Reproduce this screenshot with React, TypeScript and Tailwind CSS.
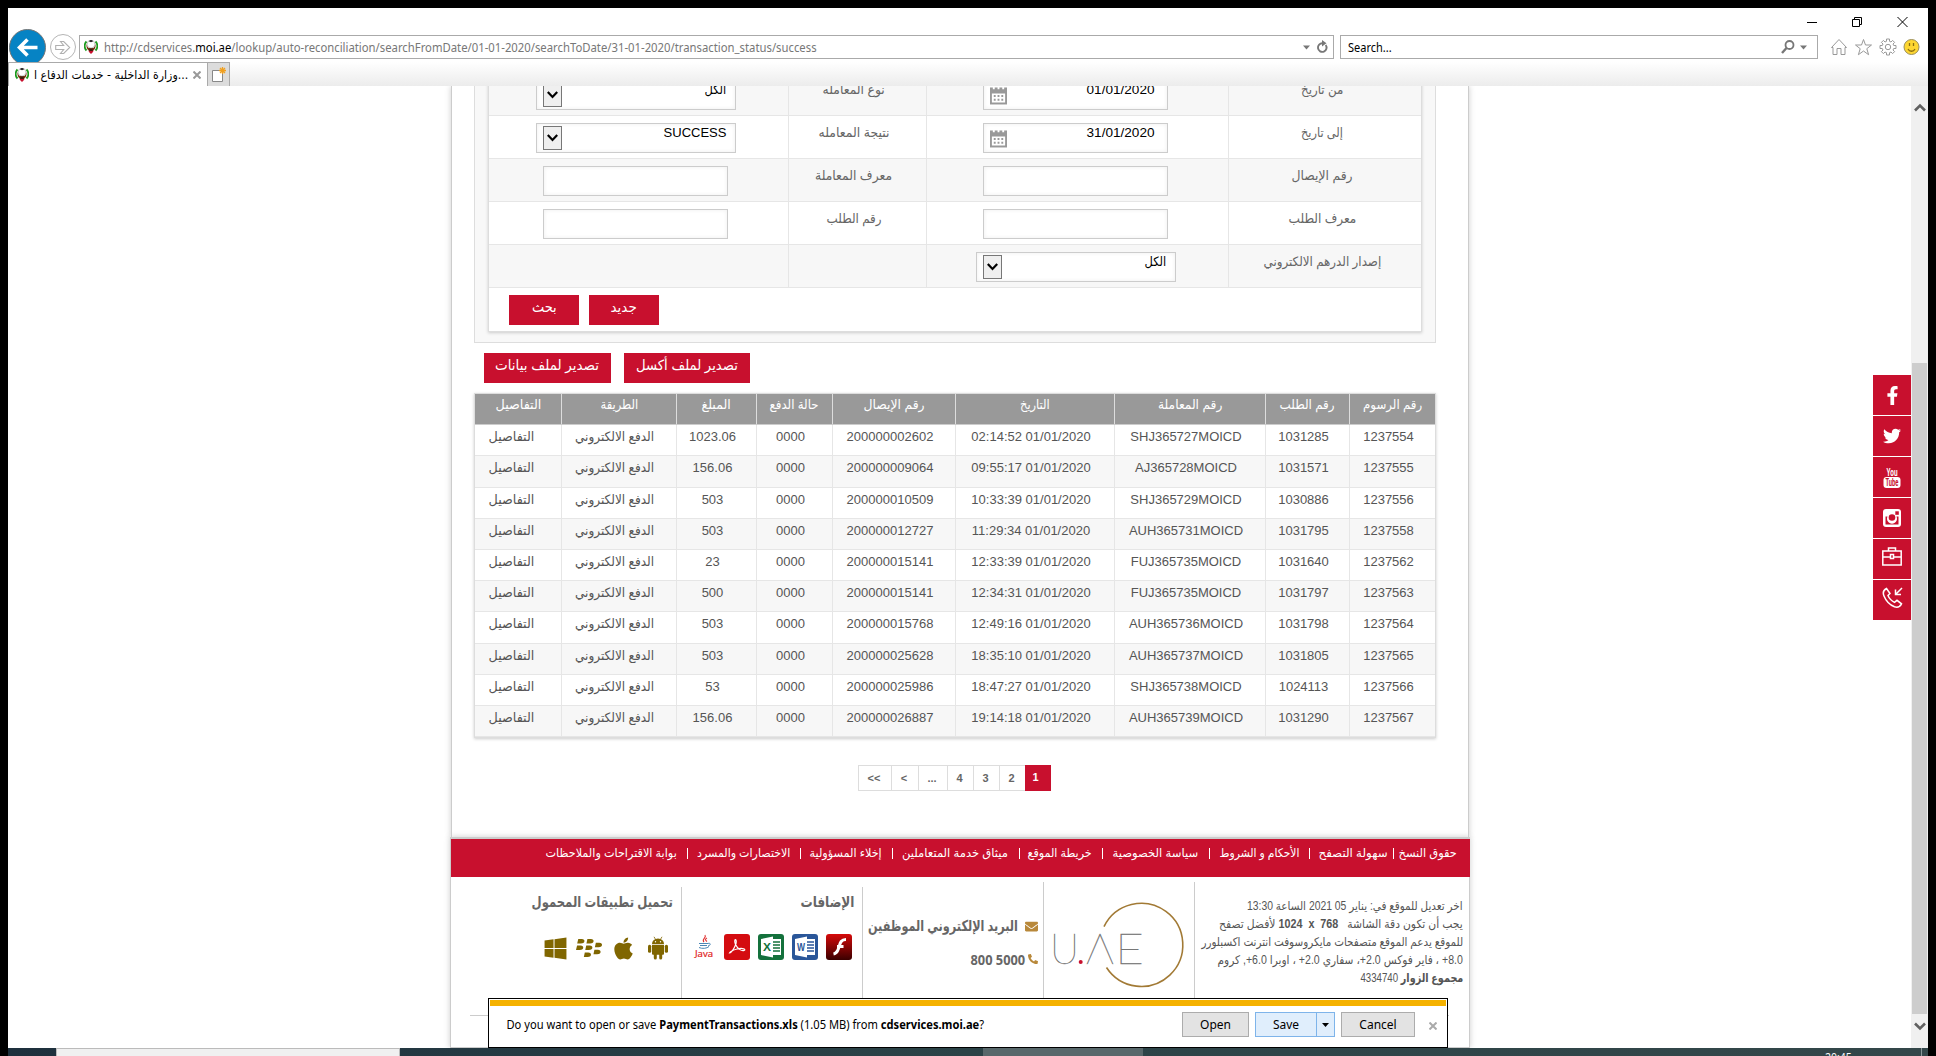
import React, { useLayoutEffect, useRef, useState } from "react";
import { FaApple, FaEnvelope, FaFacebookF, FaPhoneAlt, FaTwitter, FaWindows, FaBlackberry } from "react-icons/fa";

/* Sets a label to a fixed width by condensing or widening its glyphs. */
function Fit({ w, children, className = "" }: { w: number; children: React.ReactNode; className?: string }) {
  const ref = useRef<HTMLSpanElement>(null);
  const [scale, setScale] = useState(1);
  useLayoutEffect(() => {
    const el = ref.current;
    if (el && el.offsetWidth) setScale(w / el.offsetWidth);
  }, [w]);
  return (
    <span className={`inline-flex shrink-0 justify-center whitespace-nowrap ${className}`} style={{ width: w }}>
      <span ref={ref} className="inline-block shrink-0" style={{ transform: `scaleX(${scale})` }}>
        {children}
      </span>
    </span>
  );
}

function Emblem() {
  return (
    <svg width="14" height="16" viewBox="0 0 14 16" className="shrink-0">
      <path d="M2.500 2.500C0 5 0 9 2.500 11.500M11.500 2.500C14 5 14 9 11.500 11.500" fill="none" stroke="#1c9a1c" strokeWidth="1.800" />
      <path d="M2.500 5C2 9 3.500 11.500 7 13C10.500 11.500 12 9 11.500 5L9.500 9h-5z" fill="#7a3410" />
      <circle cx="7" cy="5.200" r="3.900" fill="#fff" stroke="#aaa" strokeWidth=".7" />
      <path d="M4.800 2.200a3 3 0 0 1 4.400 0l-2.200 1z" fill="#222" />
      <path d="M4.500 12h5l-1 1.500-1.500 1.500-1.500-1.500z" fill="#c8102e" />
      <path d="M5.300 9.500h3.400v2.500H5.300z" fill="#3b1c0c" />
    </svg>
  );
}

function TitleBar() {
  return (
    <div className="flex h-[27px] items-center justify-end pr-[20px] pt-px">
      <svg width="101" height="12" viewBox="0 0 101 12" fill="none" stroke="#000" strokeWidth="1">
        <path d="M0 6.500h10" />
        <path d="M45.500 3.500h7v7h-7zM47.500 3.500v-2h7v7h-2" />
        <path d="M90.500 1l10 10M100.500 1l-10 10" />
      </svg>
    </div>
  );
}

function AddressRow() {
  return (
    <div className="flex h-[24px] items-center font-['Noto_Sans','Open_Sans',sans-serif] text-[12px]">
      <div className="relative z-10 ml-[1px] grid h-[37px] w-[37px] shrink-0 place-items-center rounded-full border border-[#777] bg-[#0683c4]">
        <svg width="21" height="19" viewBox="0 0 21 19" fill="none" stroke="#fff" strokeWidth="3.600">
          <path d="M20.500 9.500H3M10.500 1.500L2.500 9.500l8 8" />
        </svg>
      </div>
      <div className="ml-[4px] grid h-[26px] w-[26px] shrink-0 place-items-center rounded-full border border-[#b5b5b5]">
        <svg width="16" height="15" viewBox="0 0 16 15" fill="none" stroke="#b0b0b0" strokeWidth="1.100">
          <path d="M.7 5.500h8L5.500 1.500h3.200l6 6-6 6H5.500l3.200-4h-8z" />
        </svg>
      </div>
      <div className="ml-[3px] flex h-[24px] w-[1255px] shrink-0 items-center border border-[#aaa] bg-white pl-[4px]">
        <Emblem />
        <div className="ml-[6px] grow pt-[2px] text-[#777]">
          <Fit w={713}>
            http://cdservices.<span className="text-black">moi.ae</span>
            /lookup/auto-reconciliation/searchFromDate/01-01-2020/searchToDate/31-01-2020/transaction_status/success
          </Fit>
        </div>
        <svg width="26" height="16" viewBox="0 0 26 16" className="mr-[4px]">
          <path d="M0 6.500h7l-3.500 4z" fill="#777" />
          <path d="M22.700 6a4.300 4.300 0 1 1-3-1.700" fill="none" stroke="#777" strokeWidth="1.900" />
          <path d="M19 1l4.500 3.300L19 7.500z" fill="#777" />
        </svg>
      </div>
      <div className="ml-[6px] flex h-[24px] w-[478px] shrink-0 items-center border border-[#aaa] bg-white pl-[7px]">
        <div className="grow pt-[2px] text-black">
          <Fit w={44}>Search...</Fit>
        </div>
        <svg width="27" height="16" viewBox="0 0 27 16" className="mr-[9px]">
          <circle cx="8.500" cy="6" r="4" fill="none" stroke="#777" strokeWidth="1.800" />
          <path d="M5.500 9L1 14" stroke="#777" strokeWidth="2.400" />
          <path d="M19 6.500h7l-3.500 4z" fill="#777" />
        </svg>
      </div>
      <svg width="90" height="18" viewBox="0 0 90 18" className="ml-[12px] shrink-0" fill="none" stroke="#999" strokeWidth="1">
        <path d="M1.500 9.500L9 1.500l7.500 8-1.500 0V16.500h-4v-6H7v6H3V9.500z" />
        <path d="M33.500 1.500l2 5.500h6l-4.700 3.700 1.800 6-5.100-3.700-5.100 3.700 1.800-6L25.500 7h6z" />
        <g transform="translate(58 9)">
          <path d="M-1.500-8h3v2.300l1.500.7L4.600-6.600l2 2L5-3l.7 1.500H8v3H5.700L5 3l1.600 1.600-2 2L3 5l-1.500.7V8h-3V5.700L-3 5l-1.600 1.600-2-2L-5 3l-.7-1.500H-8v-3h2.300L-5-3l-1.600-1.600 2-2L-3-5l1.500-.7z" />
          <circle r="2.700" />
        </g>
        <circle cx="81.500" cy="9" r="7.500" fill="#fdd632" stroke="#9b8f5c" />
        <path d="M79.500 5v3M83.500 5v3M78 11c1.500 3 5.500 3 7 0" stroke="#8a6d10" strokeWidth="1.300" />
      </svg>
    </div>
  );
}

function TabStrip() {
  return (
    <div className="flex h-[24px] items-stretch bg-gradient-to-b from-white to-[#ececec]">
      <div className="relative z-20 flex w-[199px] items-center border-l border-t border-[#aaa] bg-white pl-[6px]">
        <Emblem />
        <div dir="rtl" className="ml-[5px] font-['DejaVu_Sans',sans-serif] text-[12px] text-black">
          <Fit w={154}>...وزارة الداخلية - خدمات الدفاع ا</Fit>
        </div>
        <svg width="8" height="8" viewBox="0 0 8 8" className="ml-[5px]" stroke="#999" strokeWidth="2">
          <path d="M.5.5l7 7M7.500.5l-7 7" />
        </svg>
      </div>
      <div className="relative z-20 grid w-[23px] place-items-center border border-b-0 border-[#aaa] bg-[#dcdcdc]">
        <svg width="15" height="16" viewBox="0 0 15 16">
          <path d="M1.500 3.500h10v11h-10z" fill="#fff" stroke="#888" />
          <path d="M11.500 0v7M8 3.500h7M9 1l5 5M14 1L9 6" stroke="#f0a020" strokeWidth="1.300" />
        </svg>
      </div>
    </div>
  );
}

const inputBox = "h-[30px] border border-[#ccc] bg-white shadow-[inset_0_0_4px_#eee]";

function Select({ value, w }: { value: string; w: number }) {
  return (
    <div dir="rtl" className={`${inputBox} flex w-[200px] items-start pl-[6px] pr-[8px] text-[13px] text-black`}>
      <div className="grow leading-[18px]">
        <Fit w={w}>{value}</Fit>
      </div>
      <div className="mt-[2px] grid h-[24px] w-[19px] place-items-center border border-[#777] bg-[#efefef]">
        <svg width="11" height="8" viewBox="0 0 11 8" fill="none" stroke="#000" strokeWidth="2.200">
          <path d="M.8 1l4.700 5L10.200 1" />
        </svg>
      </div>
    </div>
  );
}

function DateInput({ value }: { value: string }) {
  return (
    <div dir="rtl" className={`${inputBox} flex w-[185px] justify-between pl-[6px] pr-[12px] text-[13px] text-black`}>
      <Fit w={68} className="leading-[18px]">{value}</Fit>
      <svg width="17" height="19" viewBox="0 0 18 19" className="mt-[5px]">
        <path d="M0 1h18v18H0z" fill="#999" />
        <path d="M2 7.500h14V17H2zM3 0h2v3H3zM8 0h2v3H8zM13 0h2v3h-2z" fill="#fff" />
        <path d="M4 9h2v2H4zM8 9h2v2H8zM12 9h2v2h-2zM4 13h2v2H4zM8 13h2v2H8zM12 13h2v2h-2z" fill="#999" />
      </svg>
    </div>
  );
}

const TextInput = () => <div className={`${inputBox} w-[185px]`} />;

const formRows: { r: [string, number]; rc: React.ReactNode; l?: [string, number]; lc?: React.ReactNode }[] = [
  { r: ["من تاريخ", 42], rc: <DateInput value="01/01/2020" />, l: ["نوع المعامله", 62], lc: <Select value="الكل" w={22} /> },
  { r: ["إلى تاريخ", 42], rc: <DateInput value="31/01/2020" />, l: ["نتيجة المعامله", 71], lc: <Select value="SUCCESS" w={63} /> },
  { r: ["رقم الإيصال", 61], rc: <TextInput />, l: ["معرف المعاملة", 77], lc: <TextInput /> },
  { r: ["معرف الطلب", 68], rc: <TextInput />, l: ["رقم الطلب", 55], lc: <TextInput /> },
  { r: ["إصدار الدرهم الالكتروني", 118], rc: <Select value="الكل" w={22} /> },
];

function RedButton({ children, w, tw }: { children: string; w: string; tw: number }) {
  return (
    <button dir="rtl" className={`flex h-[30px] justify-center bg-[#c8102e] text-[14px] leading-[25px] text-white ${w}`}>
      <Fit w={tw}>{children}</Fit>
    </button>
  );
}

function SearchForm() {
  return (
    <div className="-mt-[13px] ml-[22px] w-[962px] border-x border-b border-[#ddd] bg-[#f8f8f8] px-[13px] pb-[10px]">
      <div className="border-x border-b border-[#ddd] bg-white shadow-[0_1px_3px_#ccc]">
        {formRows.map((row, i) => (
          <div
            key={i}
            dir="rtl"
            className={`grid h-[43px] grid-cols-[193px_302px_138px_1fr] border-b border-[#e6e6e6] text-[13px] text-[#666] ${i % 2 ? "bg-white" : "bg-[#f7f7f7]"}`}
          >
            <div className="flex justify-center border-l border-[#e6e6e6] pr-[6px] leading-[34px]">
              <Fit w={row.r[1]}>{row.r[0]}</Fit>
            </div>
            <div className="flex items-start justify-center border-l border-[#e6e6e6] pr-[4px] pt-[7px]">{row.rc}</div>
            <div className="flex justify-center border-l border-[#e6e6e6] pr-[7px] leading-[34px]">
              {row.l && <Fit w={row.l[1]}>{row.l[0]}</Fit>}
            </div>
            <div className="flex items-start justify-center pr-[6px] pt-[7px]">{row.lc}</div>
          </div>
        ))}
        <div className="flex h-[43px] items-start gap-[10px] pl-[20px] pt-[7px]">
          <RedButton w="w-[70px]" tw={25}>بحث</RedButton>
          <RedButton w="w-[70px]" tw={26}>جديد</RedButton>
        </div>
      </div>
    </div>
  );
}

const headers: [string, number][] = [
  ["رقم الرسوم", 59],
  ["رقم الطلب", 55],
  ["رقم المعاملة", 64],
  ["التاريخ", 30],
  ["رقم الإيصال", 61],
  ["حالة الدفع", 49],
  ["المبلغ", 29],
  ["الطريقة", 38],
  ["التفاصيل", 46],
];

const rows: string[][] = [
  ["1237554", "1031285", "SHJ365727MOICD", "02:14:52 01/01/2020", "200000002602", "1023.06"],
  ["1237555", "1031571", "AJ365728MOICD", "09:55:17 01/01/2020", "200000009064", "156.06"],
  ["1237556", "1030886", "SHJ365729MOICD", "10:33:39 01/01/2020", "200000010509", "503"],
  ["1237558", "1031795", "AUH365731MOICD", "11:29:34 01/01/2020", "200000012727", "503"],
  ["1237562", "1031640", "FUJ365735MOICD", "12:33:39 01/01/2020", "200000015141", "23"],
  ["1237563", "1031797", "FUJ365735MOICD", "12:34:31 01/01/2020", "200000015141", "500"],
  ["1237564", "1031798", "AUH365736MOICD", "12:49:16 01/01/2020", "200000015768", "503"],
  ["1237565", "1031805", "AUH365737MOICD", "18:35:10 01/01/2020", "200000025628", "503"],
  ["1237566", "1024113", "SHJ365738MOICD", "18:47:27 01/01/2020", "200000025986", "53"],
  ["1237567", "1031290", "AUH365739MOICD", "19:14:18 01/01/2020", "200000026887", "156.06"],
];

const cols = "grid-cols-[86px_84px_151px_159px_123px_76px_80px_115px_86px]";

function PaymentsTable() {
  return (
    <div className="ml-[22px] mt-[10px] w-[962px] border border-[#ddd] text-[13px] text-[#555] shadow-[0_1px_3px_#ccc]">
      <div dir="rtl" className={`grid h-[31px] border-b border-[#ccc] bg-[#999] text-white ${cols}`}>
        {headers.map(([t, w], i) => (
          <div key={i} className="flex justify-center border-l border-[#ddd] leading-[22px] last:border-l-0">
            <Fit w={w}>{t}</Fit>
          </div>
        ))}
      </div>
      {rows.map((r, i) => (
        <div
          key={i}
          dir="rtl"
          className={`grid border-b border-[#e6e6e6] leading-[24px] ${cols} ${i === 1 || i === 6 ? "h-[32px]" : "h-[31px]"} ${i % 2 ? "bg-[#f7f7f7]" : "bg-white"}`}
        >
          {[...r.slice(0, 5), "0000", r[5]].map((c, j) => (
            <div key={j} dir="ltr" className="border-l border-[#e6e6e6] pr-[8px] text-center">
              {c}
            </div>
          ))}
          <div className="flex justify-center border-l border-[#e6e6e6] pr-[8px]">
            <Fit w={79}>الدفع الالكتروني</Fit>
          </div>
          <div className="flex justify-center pr-[14px]">
            <Fit w={46}>التفاصيل</Fit>
          </div>
        </div>
      ))}
    </div>
  );
}

const pages: [string, string][] = [
  ["<<", "w-[33px]"],
  ["<", "w-[27px]"],
  ["...", "w-[29px]"],
  ["4", "w-[26px]"],
  ["3", "w-[26px]"],
  ["2", "w-[26px]"],
];

function Pagination() {
  return (
    <div className="ml-[406px] mt-[27px] flex h-[26px] text-[11px] font-bold leading-[24px] text-[#666]">
      {pages.map(([t, w]) => (
        <div key={t} className={`border-y border-l border-[#ddd] pr-[2px] text-center ${w}`}>{t}</div>
      ))}
      <div className="w-[26px] bg-[#c8102e] pr-[5px] text-center text-white">1</div>
    </div>
  );
}

/* label, label width, margins of the divider that follows it */
const links: [string, number, string][] = [
  ["حقوق النسخ", 58, "mx-[5px]"],
  ["سهولة التصفح", 69, "ml-[10px] mr-[9px]"],
  ["الأحكام و الشروط", 80, "ml-[11px] mr-[9px]"],
  ["سياسة الخصوصية", 86, "ml-[10px] mr-[9px]"],
  ["خريطة الموقع", 64, "ml-[11px] mr-[8px]"],
  ["ميثاق خدمة المتعاملين", 106, "ml-[10px] mr-[9px]"],
  ["إخلاء المسؤولية", 72, "ml-[10px] mr-[9px]"],
  ["الاختصارات والمسرد", 93, "ml-[10px] mr-[9px]"],
  ["بوابة الاقتراحات والملاحظات", 131, ""],
];

function UaeLogo() {
  return (
    <svg width="150" height="112" viewBox="0 0 150 112" className="font-[Lato]">
      <path d="M60 44.700A41.500 41.500 0 1 1 62.500 85.500" fill="none" stroke="#a27a35" strokeWidth="1.600" />
      <g fill="#777" fontSize="42" fontWeight="100" stroke="#777" strokeWidth=".4">
        <text x="6" y="82" textLength="29" lengthAdjust="spacingAndGlyphs">U</text>
        <text x="42" y="82" textLength="28" lengthAdjust="spacingAndGlyphs">Λ</text>
        <text x="71" y="82" textLength="29" lengthAdjust="spacingAndGlyphs">E</text>
      </g>
      <circle cx="36.700" cy="80" r="2" fill="#c8102e" />
    </svg>
  );
}

function AndroidRobot() {
  return (
    <svg width="20" height="24" viewBox="0 0 20 24" fill="#806600" className="ml-[12px]">
      <path d="M4 8a6 5.500 0 0 1 12 0z" />
      <path d="M6 .8l1.800 3M14 .8l-1.800 3" stroke="#806600" strokeWidth=".8" />
      <path d="M4 8.800h12v9a1 1 0 0 1-1 1H5a1 1 0 0 1-1-1z" />
      <rect x="0" y="8.800" width="3.200" height="8" rx="1.500" />
      <rect x="16.800" y="8.800" width="3.200" height="8" rx="1.500" />
      <rect x="5.800" y="15" width="3" height="8.500" rx="1.500" />
      <rect x="11.200" y="15" width="3" height="8.500" rx="1.500" />
      <circle cx="7.500" cy="5.700" r=".7" fill="#fff" />
      <circle cx="12.500" cy="5.700" r=".7" fill="#fff" />
    </svg>
  );
}

function OfficeIcon({ letter, color }: { letter: string; color: string }) {
  return (
    <svg width="26" height="26" viewBox="0 0 26 26">
      <rect width="26" height="26" rx="3" fill={color} />
      <path d="M14 5h9v16h-9z" fill="#fff" />
      <path d="M15 8h7M15 11h7M15 14h7M15 17h7" stroke={color} strokeWidth="1.300" />
      <path d="M3 5l12-2.500v21L3 21z" fill="#fff" />
      <text x="9" y="17" textAnchor="middle" fontSize="11" fontWeight="700" textLength="8" lengthAdjust="spacingAndGlyphs" fill={color}>{letter}</text>
    </svg>
  );
}

function Footer() {
  return (
    <footer className="h-[211px] w-[1020px] border border-t-2 border-[#ccc] bg-white shadow-[0_0_6px_#ccc]">
      <nav dir="rtl" className="-mr-px flex h-[38px] bg-[#c8102e] pr-[13px] text-[12px] leading-[28px] text-white">
        {links.map(([t, w, m], i) => (
          <React.Fragment key={i}>
            <Fit w={w}>{t}</Fit>
            {m && <span className={`mt-[9px] h-[11px] w-px shrink-0 bg-white ${m}`} />}
          </React.Fragment>
        ))}
      </nav>
      <div className="flex h-[138px] items-start text-[#555]">
        <div className="mt-[10px] flex h-full w-[231px] flex-col items-end border-r border-[#ccc] pr-[8px]">
          <div dir="rtl" className="text-[15px] font-bold leading-[30px] text-[#666]">
            <Fit w={141}>تحميل تطبيقات المحمول</Fit>
          </div>
          <div className="mt-[18px] flex items-center pr-[5px] text-[#806600]">
            <FaWindows size={25} />
            <FaBlackberry size={26} className="ml-[8px]" />
            <FaApple size={25} className="ml-[9px]" />
            <AndroidRobot />
          </div>
        </div>
        <div className="mt-[10px] flex h-full w-[181px] flex-col items-end border-r border-[#ccc] pr-[8px]">
          <div dir="rtl" className="text-[15px] font-bold leading-[30px] text-[#666]">
            <Fit w={54}>الإضافات</Fit>
          </div>
          <div className="mt-[17px] flex items-center gap-[8px] pr-[2px]">
            <svg width="24" height="26" viewBox="0 0 24 26">
              <path d="M13 1c2 3-4 4-1 7M15 4c-2 1-2 2 0 3.500" fill="none" stroke="#e03030" strokeWidth="1.100" />
              <path d="M7 9.500h9M8 11.500h7M7 13.500c3 1.500 8 1 10-1M16 9.500c3-1 3 2 0 2.500" fill="none" stroke="#4b86b4" strokeWidth="1" />
              <text x="12" y="23" textAnchor="middle" fontSize="9" textLength="18" lengthAdjust="spacingAndGlyphs" fill="#e02020" stroke="#e02020" strokeWidth=".2" fontFamily="Open Sans">Java</text>
            </svg>
            <svg width="26" height="26" viewBox="0 0 26 26">
              <rect width="26" height="26" rx="3" fill="#d40c10" />
              <path d="M5.500 19c2 0 8-9 6.500-13-1-1.500-2 1-.5 4.500 2 4 6 7 8.500 6s-1-3-7-1.500c-4 1-6.500 2-7.500 4z" fill="none" stroke="#fff" strokeWidth="1.200" />
            </svg>
            <OfficeIcon letter="X" color="#14713c" />
            <OfficeIcon letter="W" color="#2a5699" />
            <svg width="26" height="26" viewBox="0 0 26 26">
              <defs>
                <linearGradient id="flash" x2="0" y2="1">
                  <stop offset="0" stopColor="#d60a0a" />
                  <stop offset="1" stopColor="#3a0000" />
                </linearGradient>
              </defs>
              <rect width="26" height="26" rx="3" fill="url(#flash)" />
              <path d="M20 5.500c-6 0-6 5-7.500 9-1 3-2.500 5-5 5.500M11 12.500h6.500" fill="none" stroke="#fff" strokeWidth="3" />
            </svg>
          </div>
        </div>
        <div className="mt-[5px] flex h-full w-[181px] flex-col items-end border-r border-[#ccc] pr-[5px] pt-[29px] text-[#666]">
          <div dir="rtl" className="flex h-[30px] items-center gap-[7px] text-[15px] font-bold">
            <FaEnvelope size={13} color="#b8883a" />
            <Fit w={150}>البريد الإلكتروني الموظفين</Fit>
          </div>
          <div dir="rtl" className="mt-[3px] flex h-[30px] items-center gap-[3px] font-['Open_Sans'] text-[14px] font-bold">
            <FaPhoneAlt size={10} color="#b8883a" />
            <Fit w={55}><bdi dir="ltr">800 5000</bdi></Fit>
          </div>
        </div>
        <div className="mt-[5px] h-full w-[151px] border-r border-[#ccc]">
          <UaeLogo />
        </div>
        <div dir="rtl" className="grow pr-[6px] pt-[20px] text-[12px] leading-[18px]">
          <div><Fit w={216}>اخر تعديل للموقع في: يناير 05 2021 الساعة 13:30</Fit></div>
          <div>
            <Fit w={244}>
              يجب أن تكون دقة الشاشة &nbsp; <b dir="ltr">1024 &nbsp;x&nbsp; 768</b> لأفضل تصفح
            </Fit>
          </div>
          <div><Fit w={262}>للموقع يدعم الموقع متصفحات مايكروسوفت انترنت اكسبلورر</Fit></div>
          <div>
            <Fit w={245}>
              <bdi dir="ltr">+8.0</bdi> ، فاير فوكس <bdi dir="ltr">+2.0</bdi>، سفاري <bdi dir="ltr">+2.0</bdi> ، اوبرا <bdi dir="ltr">+6.0</bdi>, كروم
            </Fit>
          </div>
          <div><Fit w={103}><b>مجموع الزوار</b> 4334740</Fit></div>
        </div>
      </div>
      <div className="ml-[19px] w-[979px] border-t border-[#ccc]" />
    </footer>
  );
}

function SocialRail() {
  const tile = "grid h-[40px] w-[38px] place-items-center bg-[#c8102e] text-white";
  return (
    <div className="absolute right-[17px] top-[289px] flex flex-col gap-px">
      <div className={tile}><FaFacebookF size={19} /></div>
      <div className={tile}><FaTwitter size={18} /></div>
      <div className={tile}>
        <svg width="18" height="21" viewBox="0 0 18 21" fontFamily="Roboto" fontWeight="700">
          <text x="3.500" y="8.500" fontSize="11" textLength="11" lengthAdjust="spacingAndGlyphs" fill="#fff">You</text>
          <rect x=".5" y="10" width="17" height="11" rx="3" fill="#fff" />
          <text x="2.500" y="19" fontSize="10" textLength="13" lengthAdjust="spacingAndGlyphs" fill="#c8102e">Tube</text>
        </svg>
      </div>
      <div className={tile}>
        <svg width="18" height="18" viewBox="0 0 18 18">
          <rect width="18" height="18" rx="3" fill="#fff" />
          <path d="M2.500 7.500v8h13v-8h-2a5 5 0 1 1-9 0z" fill="#c8102e" />
          <circle cx="9" cy="8.500" r="3.300" fill="#c8102e" />
          <rect x="12.300" y="2.300" width="3.500" height="3.500" fill="#c8102e" />
        </svg>
      </div>
      <div className={tile}>
        <svg width="20" height="19" viewBox="0 0 20 19" fill="none" stroke="#fff" strokeWidth="1.500" className="-mt-[5px]">
          <path d="M.8 4h18.400v14H.8zM6.500 4V1h7v3M.8 10H8M12 10h7.200M8.500 7.500h3v4h-3z" />
        </svg>
      </div>
      <div className={tile}>
        <svg width="21" height="21" viewBox="0 0 21 21" fill="none" stroke="#fff" strokeWidth="1.500" className="-mt-[6px]">
          <path d="M4.500 1.500C1.500 3 .5 5.500 2 9c2 5 6 9 10.500 10.800 3 1 5.500 0 7-3l-4.500-3.500-2.500 2C10 14 7 11 6 8.500l2-2z" />
          <path d="M20 1l-6.500 6.500M13.500 2.500v5h5.500" />
        </svg>
      </div>
    </div>
  );
}

function DownloadBar() {
  const button = "h-[25px] border border-[#acacac] bg-[#e3e3e3] text-center leading-[23px]";
  return (
    <div className="absolute left-[480px] top-[912px] h-[50px] w-[960px] border border-black bg-white p-px font-['Noto_Sans','Open_Sans',sans-serif] text-[12px] text-black">
      <div className="h-[6px] bg-[#f5b200]" />
      <div className="flex items-center pl-[16px] pt-[6px]">
        <div className="w-[676px] shrink-0">
          <Fit w={478}>
            Do you want to open or save <b>PaymentTransactions.xls</b> (1.05 MB) from <b>cdservices.moi.ae</b>?
          </Fit>
        </div>
        <div className={`w-[67px] ${button}`}>Open</div>
        <div className="ml-[6px] flex h-[25px] w-[80px] border border-[#7eb4ea] bg-[#e0eefc] leading-[23px]">
          <div className="grow border-r border-[#7eb4ea] text-center">Save</div>
          <div className="grid w-[17px] place-items-center">
            <svg width="7" height="4" viewBox="0 0 7 4"><path d="M0 0h7L3.500 4z" /></svg>
          </div>
        </div>
        <div className={`ml-[6px] w-[74px] ${button}`}>Cancel</div>
        <svg width="8" height="8" viewBox="0 0 8 8" className="ml-[14px] mt-[3px]" stroke="#aaa" strokeWidth="2">
          <path d="M.5.5l7 7M7.500.5l-7 7" />
        </svg>
      </div>
    </div>
  );
}

function ScrollBar() {
  return (
    <div className="flex w-[17px] shrink-0 flex-col items-center bg-[#f0f0f0]">
      <svg width="12" height="9" viewBox="0 0 12 9" className="mt-[17px]" fill="none" stroke="#606060" strokeWidth="2.600">
        <path d="M1 7.500l5-5 5 5" />
      </svg>
      <div className="mt-[251px] h-[651px] w-[15px] bg-[#cdcdcd]" />
      <svg width="12" height="9" viewBox="0 0 12 9" className="mt-[8px]" fill="none" stroke="#606060" strokeWidth="2.600">
        <path d="M1 1.500l5 5 5-5" />
      </svg>
    </div>
  );
}

function TaskBar() {
  return (
    <div className="flex h-[8px] overflow-hidden bg-gradient-to-r from-[#1e303d] via-[#2b4347] to-[#34474a]">
      <div className="ml-[48px] w-[344px] border border-b-0 border-[#bbb] bg-[#f0f0f0]" />
      <div className="ml-[583px] w-[160px] bg-[#58686b]" />
      <div className="ml-[682px] pt-[4px] font-['Open_Sans'] text-[12px] leading-[12px] text-white"><Fit w={27}>20:45</Fit></div>
      <div className="ml-[69px] w-px bg-[#8a9799]" />
    </div>
  );
}

export default function App() {
  return (
    <div className="h-[1056px] w-[1936px] overflow-hidden bg-black px-[8px] pt-[8px] font-['Liberation_Sans','DejaVu_Sans',sans-serif]">
      <div className="h-[78px] bg-white">
        <TitleBar />
        <AddressRow />
        <div className="h-[3px]" />
        <TabStrip />
      </div>
      <div className="relative flex h-[962px] overflow-hidden bg-white">
        <div className="w-[1903px] shrink-0 pl-[442px]">
          <div className="ml-px flow-root h-[751px] w-[1018px] border-x border-[#ccc] bg-white shadow-[0_0_6px_#ccc]">
            <SearchForm />
            <div className="ml-[32px] mt-[10px] flex gap-[13px]">
              <RedButton w="w-[127px]" tw={104}>تصدير لملف بيانات</RedButton>
              <RedButton w="w-[126px]" tw={102}>تصدير لملف أكسل</RedButton>
            </div>
            <PaymentsTable />
            <Pagination />
          </div>
          <Footer />
        </div>
        <ScrollBar />
        <SocialRail />
        <DownloadBar />
      </div>
      <TaskBar />
    </div>
  );
}
